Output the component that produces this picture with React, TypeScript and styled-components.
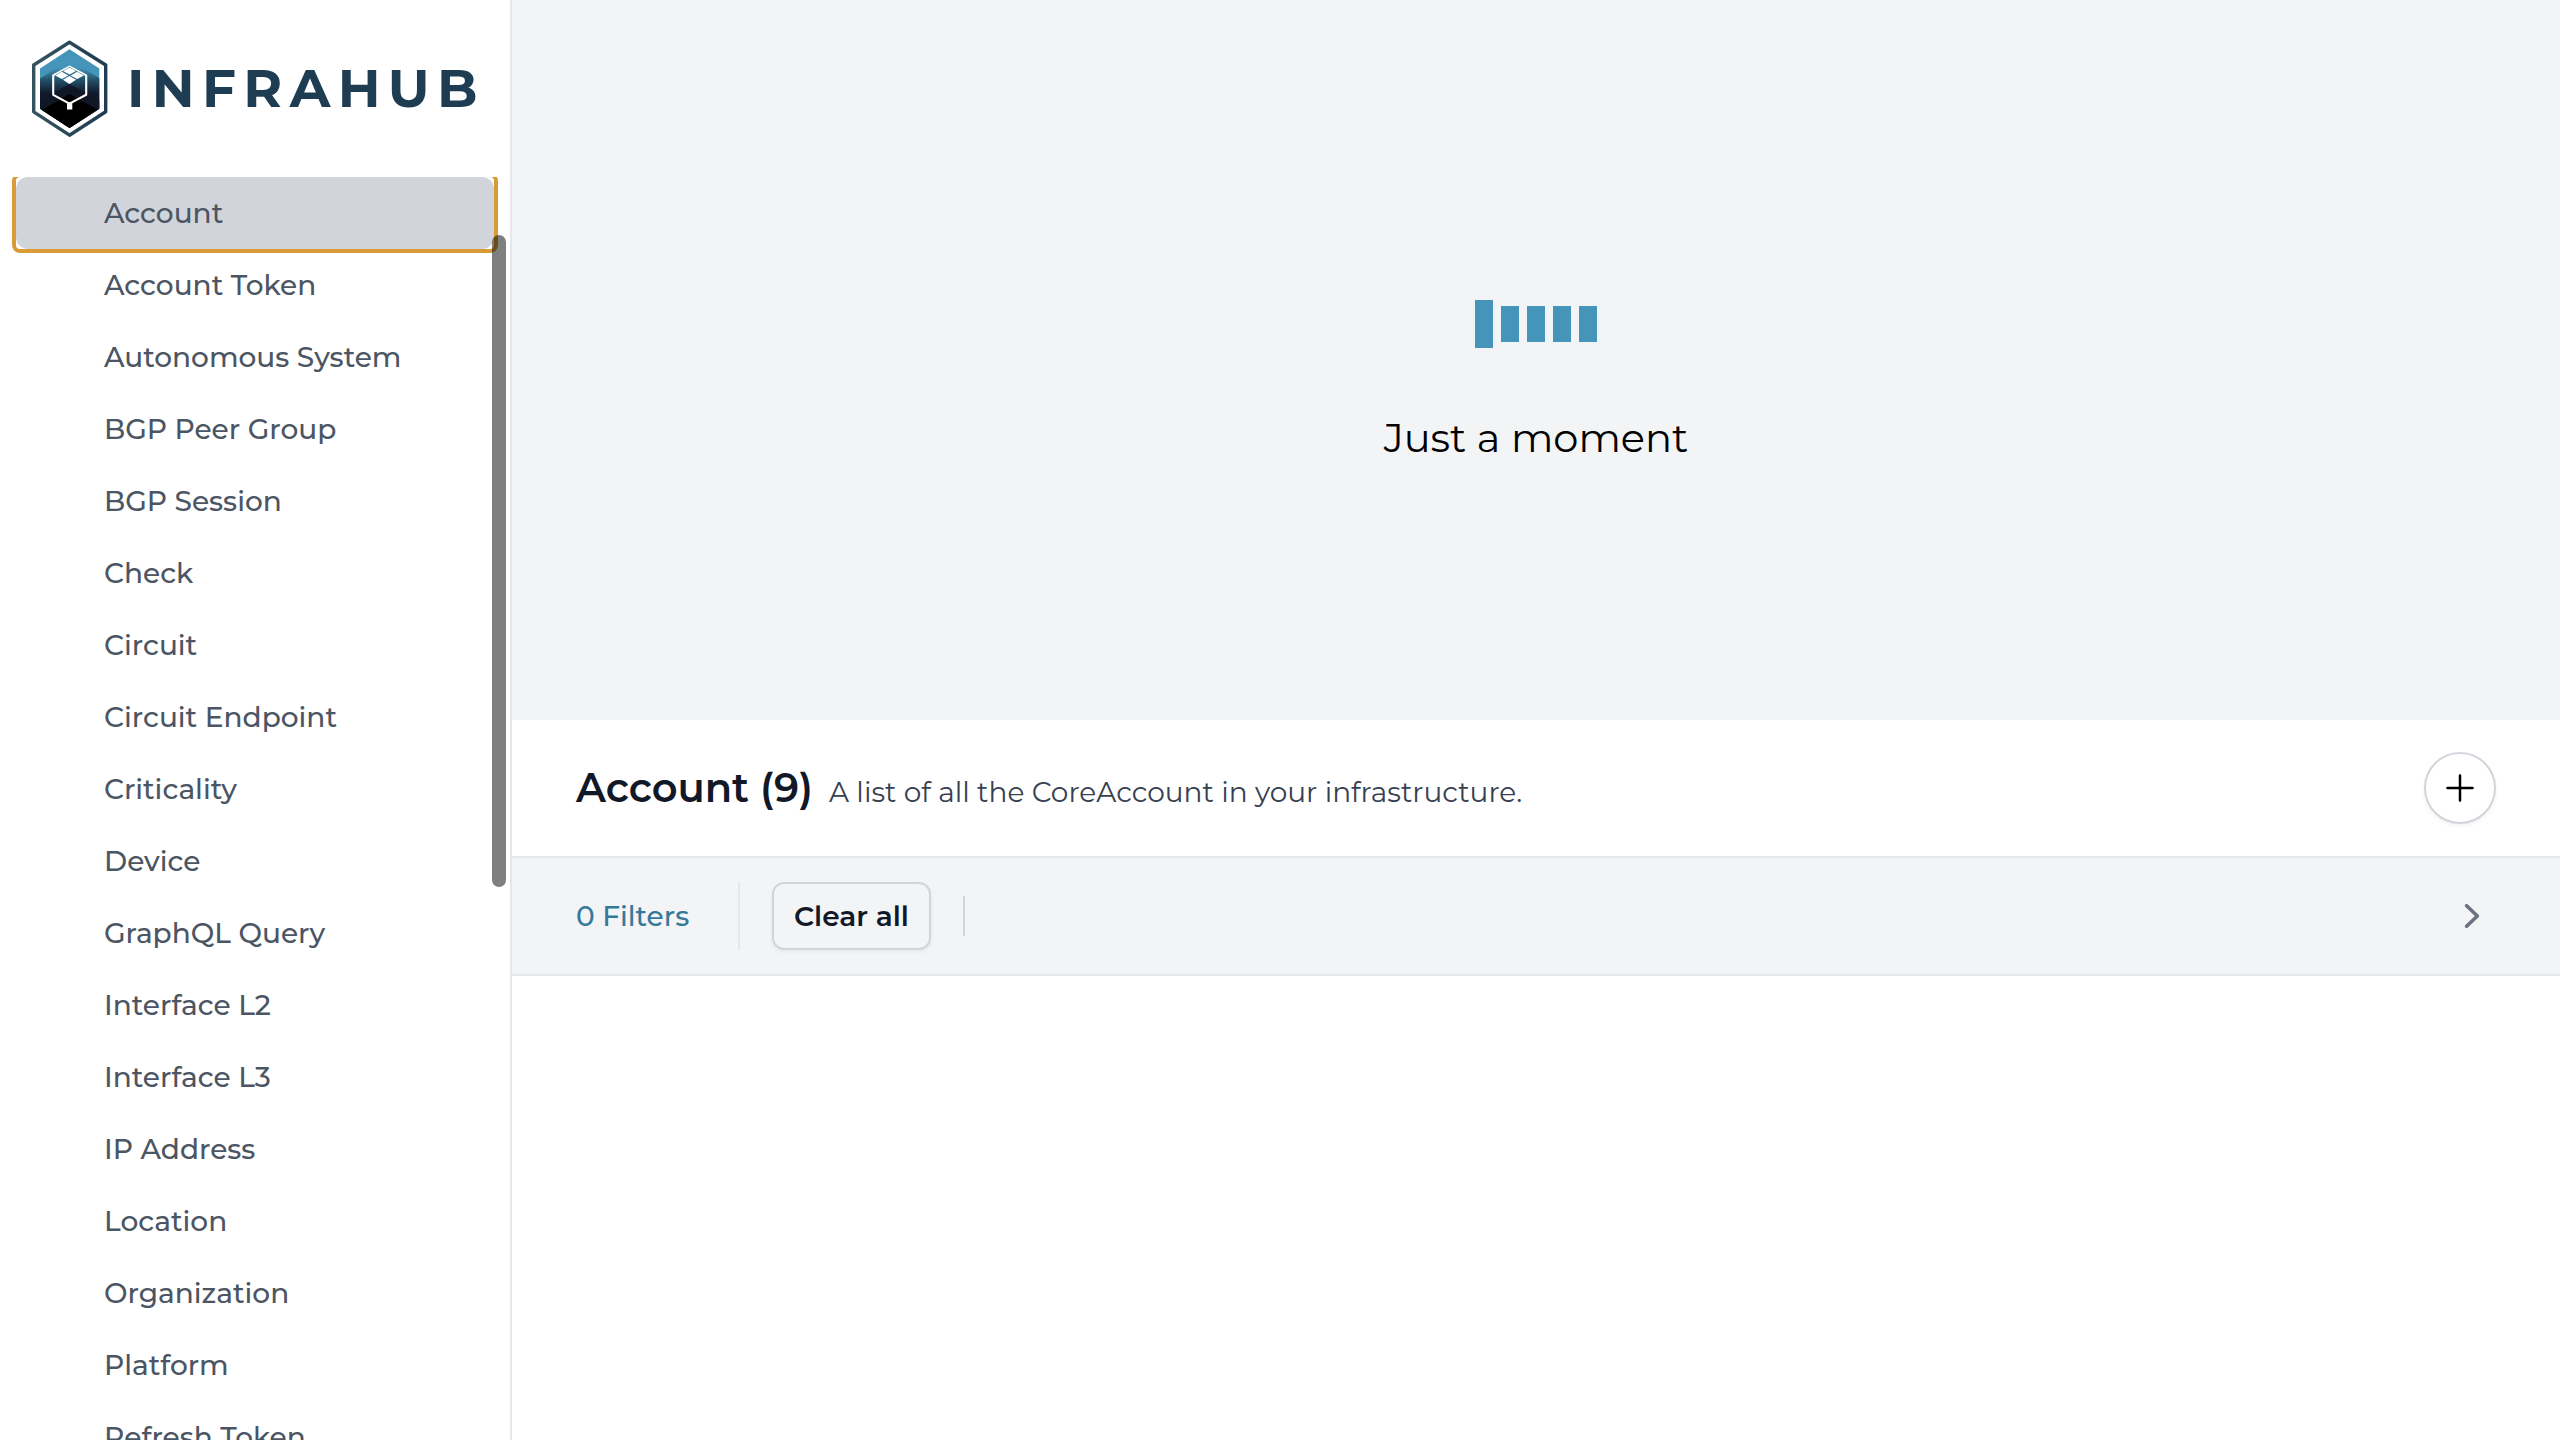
import React from "react";
import styled, { createGlobalStyle } from "styled-components";

const GlobalStyle = createGlobalStyle`
  *, *::before, *::after { box-sizing: border-box; }
  body {
    margin: 0;
    background: #ffffff;
    font-family: Montserrat, Inter, "Liberation Sans", sans-serif;
    font-size: 28px;
    line-height: 40px;
    color: #000000;
  }
  button { font: inherit; }
`;

const Page = styled.div`
  display: flex;
  height: 1440px;
  overflow: hidden;
`;

const Sidebar = styled.aside`
  position: relative;
  display: flex;
  flex-direction: column;
  width: 512px;
  flex: none;
  border-right: 2px solid #e5e7eb;
  background: #ffffff;
`;

const Brand = styled.div`
  display: flex;
  align-items: center;
  height: 177px;
  flex: none;
  padding: 0 0 2px 30px;
  gap: 17px;
`;

const Mark = styled.svg`
  display: block;
  width: 80px;
  height: 100px;
`;

const BrandName = styled.span`
  font-size: 53px;
  line-height: 64px;
  font-weight: 700;
  letter-spacing: 7.4px;
  color: #1e3d52;
`;

const NavList = styled.nav`
  flex: 1;
  min-height: 0;
  overflow: hidden;
  padding: 0 16px;
`;

const NavItem = styled.a<{ $active?: boolean }>`
  position: relative;
  display: flex;
  align-items: center;
  height: 72px;
  padding-left: 88px;
  border-radius: 12px;
  font-weight: 500;
  color: #4b5563;
  background: ${(p) => (p.$active ? "#d1d5db" : "transparent")};

  &::after {
    content: "";
    display: ${(p) => (p.$active ? "block" : "none")};
    position: absolute;
    inset: -4px;
    border: 4px solid #d99b35;
    border-radius: 8px;
  }
`;

const ScrollThumb = styled.div`
  position: absolute;
  top: 235px;
  right: 4px;
  width: 14px;
  height: 652px;
  border-radius: 7px;
  background: rgba(0, 0, 0, 0.5);
`;

const Main = styled.main`
  display: flex;
  flex-direction: column;
  flex: 1;
  min-width: 0;
`;

const Loading = styled.section`
  display: flex;
  flex-direction: column;
  align-items: center;
  height: 720px;
  padding-top: 300px;
  gap: 62px;
  background: #f3f4f6;
`;

const Bars = styled.div`
  display: flex;
  align-items: center;
  gap: 8.4px;
  height: 48px;
`;

const Bar = styled.span<{ $tall?: boolean }>`
  width: 17.8px;
  height: ${(p) => (p.$tall ? 48 : 36)}px;
  background: #4595ba;
`;

const LoadingText = styled.p`
  margin: 0;
  font-size: 40px;
  line-height: 56px;
  font-weight: 400;
`;

const Header = styled.header`
  display: flex;
  align-items: center;
  justify-content: space-between;
  height: 138px;
  padding: 0 64px;
  border-bottom: 2px solid #e5e7eb;
`;

const Heading = styled.div`
  display: flex;
  align-items: baseline;
  gap: 16px;
`;

const Title = styled.h1`
  margin: 0;
  font-size: 40px;
  line-height: 56px;
  font-weight: 600;
  color: #111827;
`;

const Subtitle = styled.p`
  margin: 0;
  font-weight: 400;
  color: #374151;
`;

const AddButton = styled.button`
  display: flex;
  align-items: center;
  justify-content: center;
  width: 72px;
  height: 72px;
  padding: 0;
  border: 2px solid #d1d5db;
  border-radius: 50%;
  background: #ffffff;
  box-shadow: 0 2px 4px rgba(0, 0, 0, 0.05);

  svg { width: 40px; height: 40px; }
`;

const FilterBar = styled.div`
  display: flex;
  align-items: center;
  height: 118px;
  padding: 0 64px;
  border-bottom: 2px solid #e5e7eb;
  background: #f3f4f6;
`;

const FilterCount = styled.div`
  display: flex;
  align-items: center;
  width: 164px;
  height: 68px;
  border-right: 2px solid #e5e7eb;
  font-weight: 500;
  color: #35799a;
`;

const ClearButton = styled.button`
  height: 68px;
  margin: 0 32px;
  padding: 0 20px;
  border: 2px solid #d1d5db;
  border-radius: 12px;
  background: #f3f4f6;
  box-shadow: 0 2px 4px rgba(0, 0, 0, 0.05);
  font-weight: 600;
  color: #111827;
`;

const Divider = styled.span`
  width: 2px;
  height: 40px;
  background: #d1d5db;
`;

const Chevron = styled.svg`
  width: 48px;
  height: 48px;
  margin-left: auto;
`;

const items = [
  "Account",
  "Account Token",
  "Autonomous System",
  "BGP Peer Group",
  "BGP Session",
  "Check",
  "Circuit",
  "Circuit Endpoint",
  "Criticality",
  "Device",
  "GraphQL Query",
  "Interface L2",
  "Interface L3",
  "IP Address",
  "Location",
  "Organization",
  "Platform",
  "Refresh Token",
];

const InfrahubMark = () => (
  <Mark viewBox="0 0 80 100">
    <defs>
      <linearGradient id="fade" x1="0" y1="24" x2="0" y2="62" gradientUnits="userSpaceOnUse">
        <stop offset="0.12" stopColor="#4595ba" />
        <stop offset="0.45" stopColor="#235068" />
        <stop offset="0.8" stopColor="#101a2b" />
      </linearGradient>
      <linearGradient id="rim" x1="0" y1="0" x2="1" y2="0">
        <stop offset="0" stopColor="#35535f" />
        <stop offset="1" stopColor="#1e3d52" />
      </linearGradient>
      <clipPath id="core">
        <path d="M39.5 10.3 69.3 29.5v40.3L39.5 89 10 69.8V29.5Z" />
      </clipPath>
    </defs>
    <g transform="translate(0 1)">
      <path d="M39.5 3.2 75.7 26v46.8L39.5 96.2 3.7 72.8V26Z" fill="none" stroke="url(#rim)" strokeWidth="3.4" strokeLinejoin="round" />
      <g clipPath="url(#core)">
        <path d="M10 8h60v84H10Z" fill="#4595ba" />
        <path d="M10 39.5 39.5 21 70 39.5V92H10Z" fill="url(#fade)" />
        <path d="M10 62 39.5 45 70 62v30H10Z" fill="#101828" />
        <path d="M10 72 39.5 55 70 72V92H10Z" fill="#000" />
      </g>
      <path d="M39.5 27.6 56.2 36.4v19.4L39.5 64.6 23.2 55.8V36.4Z" fill="none" stroke="#fff" strokeWidth="2.1" strokeLinejoin="round" />
      <path d="M37 63.5h5.3v7H37Z" fill="#fff" />
      <path d="M39.5 28 54.6 36.6 39.5 45 24.6 36.6Z" fill="#2f6b88" />
      <g fill="#fff">
        <path d="M39.5 28.4 46 32 39.5 35.6 33 32Z" />
        <path d="M31.8 32.7 38.4 36.4 31.8 40 25.2 36.4Z" />
        <path d="M47.2 32.7 53.8 36.4 47.2 40 40.6 36.4Z" />
        <path d="M39.5 37.1 46 40.8 39.5 44.9 33 40.8Z" />
      </g>
    </g>
  </Mark>
);

export default function App() {
  return (
    <>
      <GlobalStyle />
      <Page>
        <Sidebar>
          <Brand>
            <InfrahubMark />
            <BrandName>INFRAHUB</BrandName>
          </Brand>
          <NavList>
            {items.map((label, i) => (
              <NavItem key={label} $active={i === 0}>
                {label}
              </NavItem>
            ))}
          </NavList>
          <ScrollThumb />
        </Sidebar>
        <Main>
          <Loading>
            <Bars>
              <Bar $tall />
              <Bar />
              <Bar />
              <Bar />
              <Bar />
            </Bars>
            <LoadingText>Just a moment</LoadingText>
          </Loading>
          <Header>
            <Heading>
              <Title>Account (9)</Title>
              <Subtitle>A list of all the CoreAccount in your infrastructure.</Subtitle>
            </Heading>
            <AddButton aria-label="Add">
              <svg viewBox="0 0 24 24" fill="none" stroke="#000" strokeWidth="1.5" strokeLinecap="round">
                <path d="M12 4.5v15m7.5-7.5h-15" />
              </svg>
            </AddButton>
          </Header>
          <FilterBar>
            <FilterCount>0 Filters</FilterCount>
            <ClearButton>Clear all</ClearButton>
            <Divider />
            <Chevron viewBox="0 0 20 20" fill="#6b7280">
              <path
                fillRule="evenodd"
                clipRule="evenodd"
                d="M7.21 14.77a.75.75 0 01.02-1.06L11.168 10 7.23 6.29a.75.75 0 111.04-1.08l4.5 4.25a.75.75 0 010 1.08l-4.5 4.25a.75.75 0 01-1.06-.02z"
              />
            </Chevron>
          </FilterBar>
        </Main>
      </Page>
    </>
  );
}
